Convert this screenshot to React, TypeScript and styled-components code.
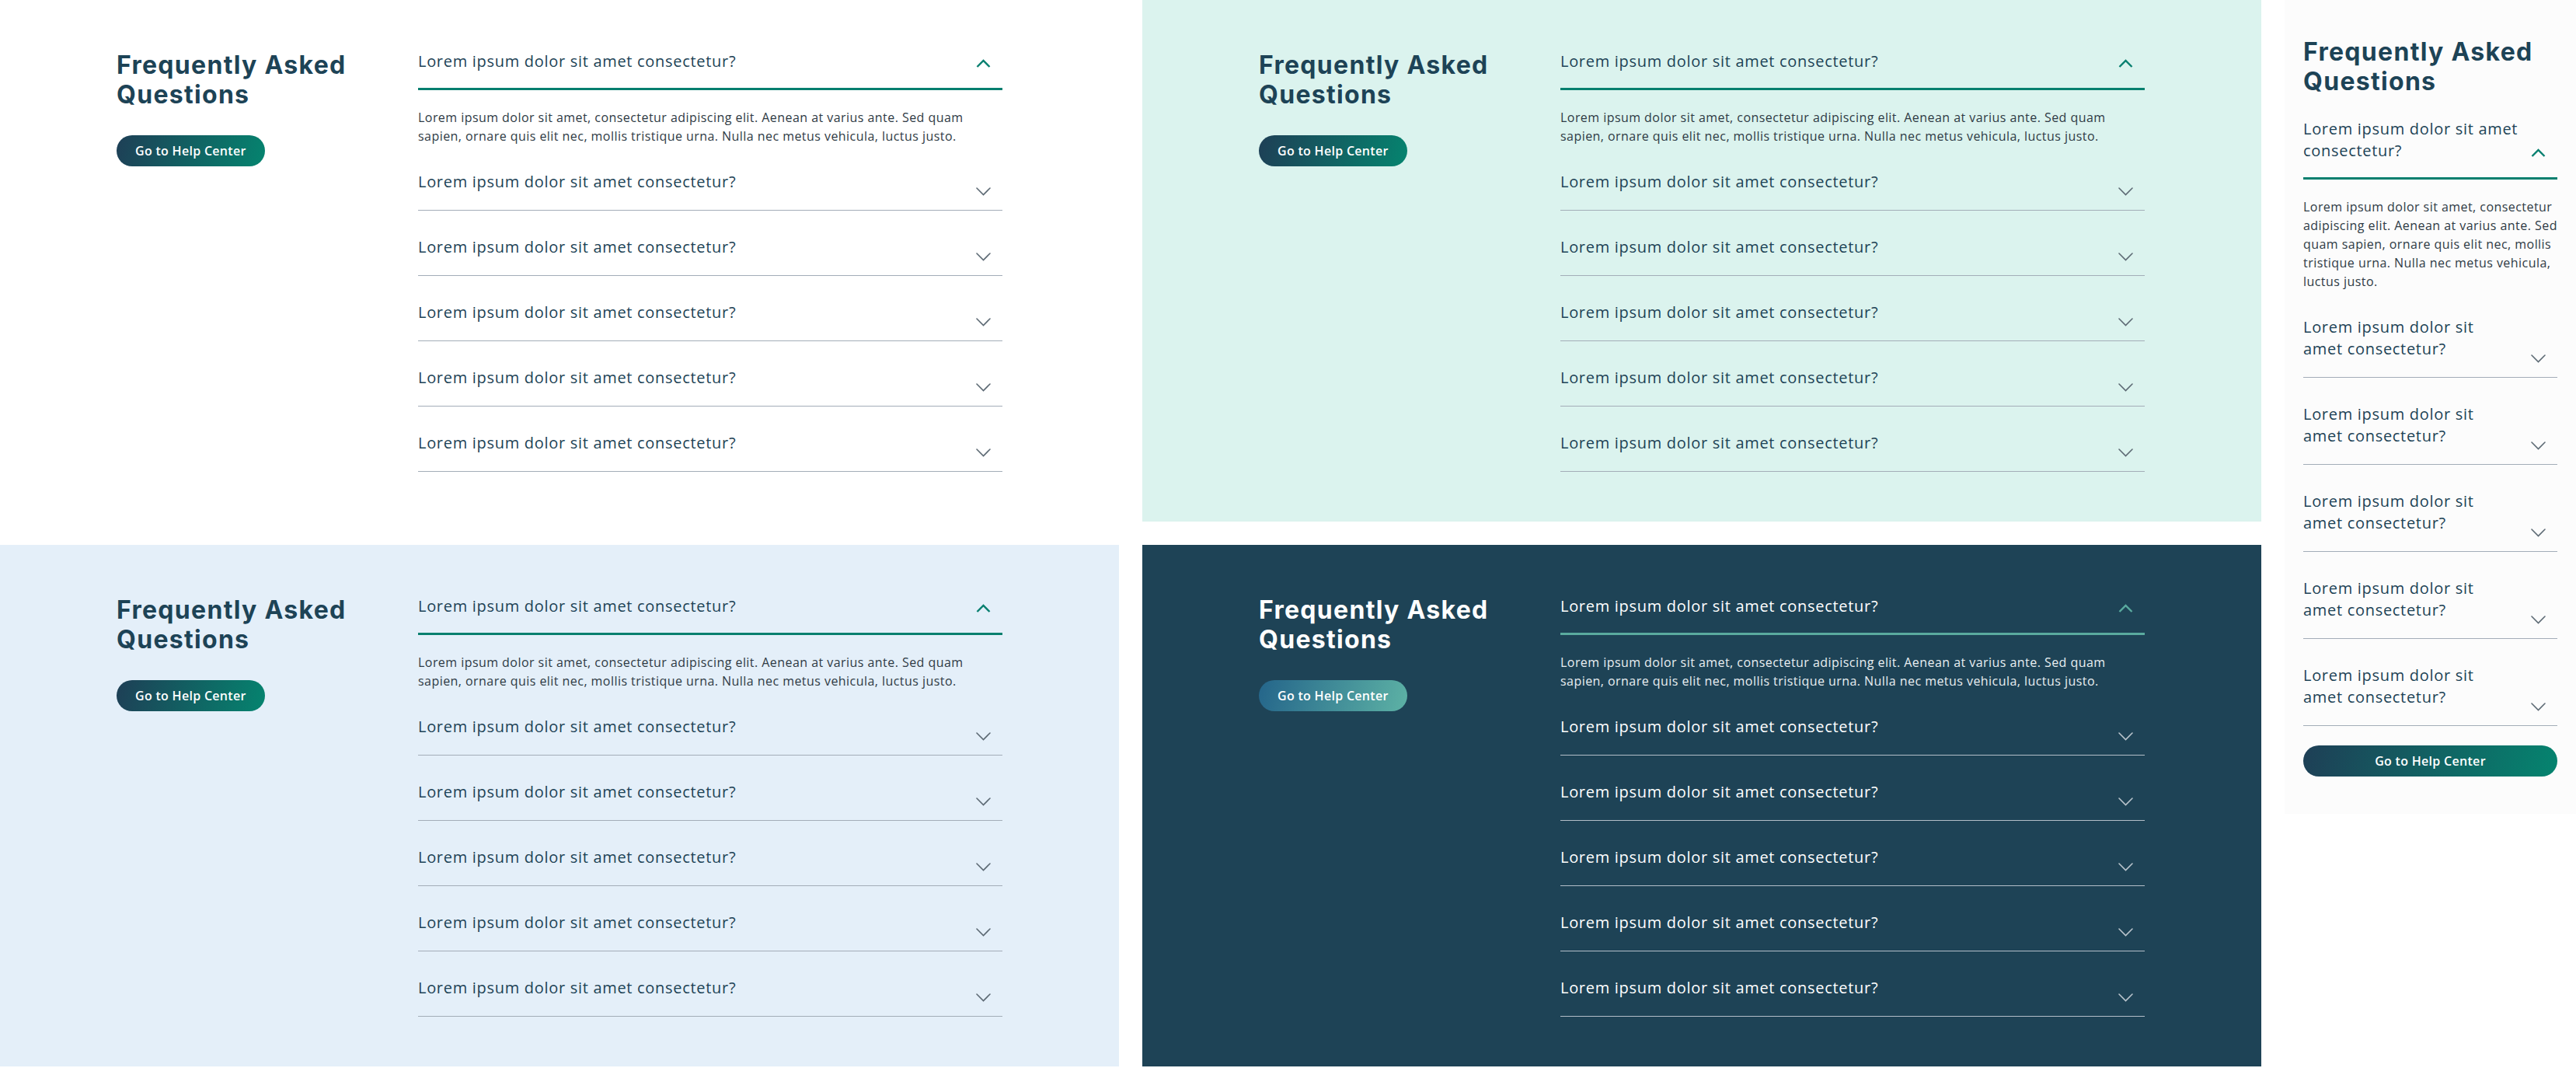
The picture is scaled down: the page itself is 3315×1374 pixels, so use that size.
import React from "react";
import styled, { createGlobalStyle } from "styled-components";

type Tone = "white" | "mint" | "sky" | "navy" | "paper";

type Palette = {
  bg: string;
  title: string;
  question: string;
  answer: string;
  rule: string;
  chevron: string;
  accent: string;
  btnFrom: string;
  btnTo: string;
};

const light = {
  title: "#1d4356",
  question: "#1d4356",
  answer: "#2f3b45",
  rule: "#a3adb8",
  chevron: "#5d6a74",
  accent: "#077f6f",
  btnFrom: "#1e3f56",
  btnTo: "#05846f",
};

const palette: Record<Tone, Palette> = {
  white: { bg: "#ffffff", ...light },
  mint: { bg: "#dbf3ee", ...light },
  sky: { bg: "#e4eff9", ...light },
  paper: { bg: "#fcfcfc", ...light },
  navy: {
    bg: "#1e4356",
    title: "#ffffff",
    question: "#ffffff",
    answer: "#e8eef1",
    rule: "#b3bec8",
    chevron: "#b9c4cc",
    accent: "#5aab9f",
    btnFrom: "#24658a",
    btnTo: "#5db2a5",
  },
};

const QUESTION = "Lorem ipsum dolor sit amet consectetur?";
const ANSWER =
  "Lorem ipsum dolor sit amet, consectetur adipiscing elit. Aenean at varius ante. Sed quam sapien, ornare quis elit nec, mollis tristique urna. Nulla nec metus vehicula, luctus justo.";

const GlobalStyle = createGlobalStyle`
  html, body { margin: 0; padding: 0; background: #ffffff; }
  body { font-family: "Open Sans", "Liberation Sans", sans-serif; }
  * { box-sizing: border-box; }
`;

const Board = styled.main`
  display: grid;
  grid-template-columns: 1440px 1440px 375px;
  grid-template-rows: auto auto;
  gap: 30px;
  align-items: start;
`;

const Panel = styled.section<{ $tone: Tone }>`
  background: ${(p) => palette[p.$tone].bg};
  display: grid;
  grid-template-columns: 358px 1fr;
  column-gap: 30px;
  align-items: start;
  padding: 32px 150px 64px;
`;

const MobilePanel = styled.section<{ $tone: Tone }>`
  grid-column: 3;
  grid-row: 1 / span 2;
  background: ${(p) => palette[p.$tone].bg};
  display: flex;
  flex-direction: column;
  padding: 48px 24px 48px;
`;

const Intro = styled.div`
  padding-top: 33px;
  display: flex;
  flex-direction: column;
  align-items: flex-start;
  gap: 32px;
`;

const Title = styled.h2<{ $tone: Tone; $compact?: boolean }>`
  margin: 0 0 ${(p) => (p.$compact ? "-6px" : "0")};
  font-family: "Inter", "Open Sans", sans-serif;
  font-weight: 700;
  font-size: 32px;
  line-height: 38.4px;
  letter-spacing: 1.3px;
  color: ${(p) => palette[p.$tone].title};
`;

const HelpButton = styled.button<{ $tone: Tone; $block?: boolean }>`
  display: inline-flex;
  align-items: center;
  justify-content: center;
  height: 40px;
  width: ${(p) => (p.$block ? "100%" : "auto")};
  margin-top: ${(p) => (p.$block ? "25px" : "0")};
  padding: 0 24px;
  border: none;
  border-radius: 20px;
  background: linear-gradient(
    105deg,
    ${(p) => palette[p.$tone].btnFrom} 0%,
    ${(p) => palette[p.$tone].btnTo} 100%
  );
  color: #ffffff;
  font-family: "Open Sans", sans-serif;
  font-weight: 600;
  font-size: 16px;
  letter-spacing: 0.3px;
  cursor: pointer;
`;

const List = styled.div`
  display: flex;
  flex-direction: column;
`;

const Item = styled.div<{ $tone: Tone; $open: boolean }>`
  border-bottom: ${(p) => (p.$open ? "none" : `1px solid ${palette[p.$tone].rule}`)};
`;

const Header = styled.button<{ $tone: Tone; $open: boolean }>`
  display: flex;
  align-items: flex-end;
  justify-content: space-between;
  gap: 8px;
  width: 100%;
  margin: 0;
  padding: 33px 15px ${(p) => (p.$open ? "20px" : "22px")} 0;
  border: none;
  border-bottom: ${(p) => (p.$open ? `3px solid ${palette[p.$tone].accent}` : "none")};
  background: none;
  text-align: left;
  cursor: pointer;
`;

const QuestionText = styled.span<{ $tone: Tone; $narrow?: boolean }>`
  font-family: "Open Sans", sans-serif;
  font-weight: 500;
  font-size: 20px;
  line-height: 28px;
  letter-spacing: 0.7px;
  color: ${(p) => palette[p.$tone].question};
  max-width: ${(p) => (p.$narrow ? "12.6em" : "none")};
`;

const ChevronBox = styled.span<{ $open: boolean }>`
  display: block;
  flex-shrink: 0;
  margin-bottom: ${(p) => (p.$open ? "6px" : "-4px")};
  line-height: 0;
`;

const Answer = styled.p<{ $tone: Tone }>`
  margin: 0;
  padding-top: 23px;
  font-family: "Open Sans", sans-serif;
  font-size: 16px;
  line-height: 24px;
  letter-spacing: 0.45px;
  color: ${(p) => palette[p.$tone].answer};
`;

function Chevron({ open, tone }: { open: boolean; tone: Tone }) {
  const c = palette[tone];
  return (
    <ChevronBox $open={open}>
      <svg width="19" height="11" viewBox="0 0 19 11" fill="none">
        {open ? (
          <polyline
            points="1.5,10 9.5,2 17.5,10"
            stroke={c.accent}
            strokeWidth="2.4"
            strokeLinecap="butt"
            strokeLinejoin="miter"
          />
        ) : (
          <polyline
            points="1,1 9.5,9.5 18,1"
            stroke={c.chevron}
            strokeWidth="1.6"
            strokeLinecap="round"
            strokeLinejoin="miter"
          />
        )}
      </svg>
    </ChevronBox>
  );
}

const OPEN_STATES = [true, false, false, false, false, false];

function Faq({ tone, mobile }: { tone: Tone; mobile?: boolean }) {
  return (
    <List>
      {OPEN_STATES.map((open, i) => (
        <Item key={i} $tone={tone} $open={open}>
          <Header $tone={tone} $open={open} type="button">
            <QuestionText $tone={tone} $narrow={mobile && !open}>
              {QUESTION}
            </QuestionText>
            <Chevron open={open} tone={tone} />
          </Header>
          {open && <Answer $tone={tone}>{ANSWER}</Answer>}
        </Item>
      ))}
    </List>
  );
}

function DesktopFaq({ tone }: { tone: Tone }) {
  return (
    <Panel $tone={tone}>
      <Intro>
        <Title $tone={tone}>Frequently Asked Questions</Title>
        <HelpButton $tone={tone} type="button">
          Go to Help Center
        </HelpButton>
      </Intro>
      <Faq tone={tone} />
    </Panel>
  );
}

export default function App() {
  return (
    <>
      <GlobalStyle />
      <Board>
        <DesktopFaq tone="white" />
        <DesktopFaq tone="mint" />
        <MobilePanel $tone="paper">
          <Title $tone="paper" $compact>
            Frequently Asked Questions
          </Title>
          <Faq tone="paper" mobile />
          <HelpButton $tone="paper" $block type="button">
            Go to Help Center
          </HelpButton>
        </MobilePanel>
        <DesktopFaq tone="sky" />
        <DesktopFaq tone="navy" />
      </Board>
    </>
  );
}
